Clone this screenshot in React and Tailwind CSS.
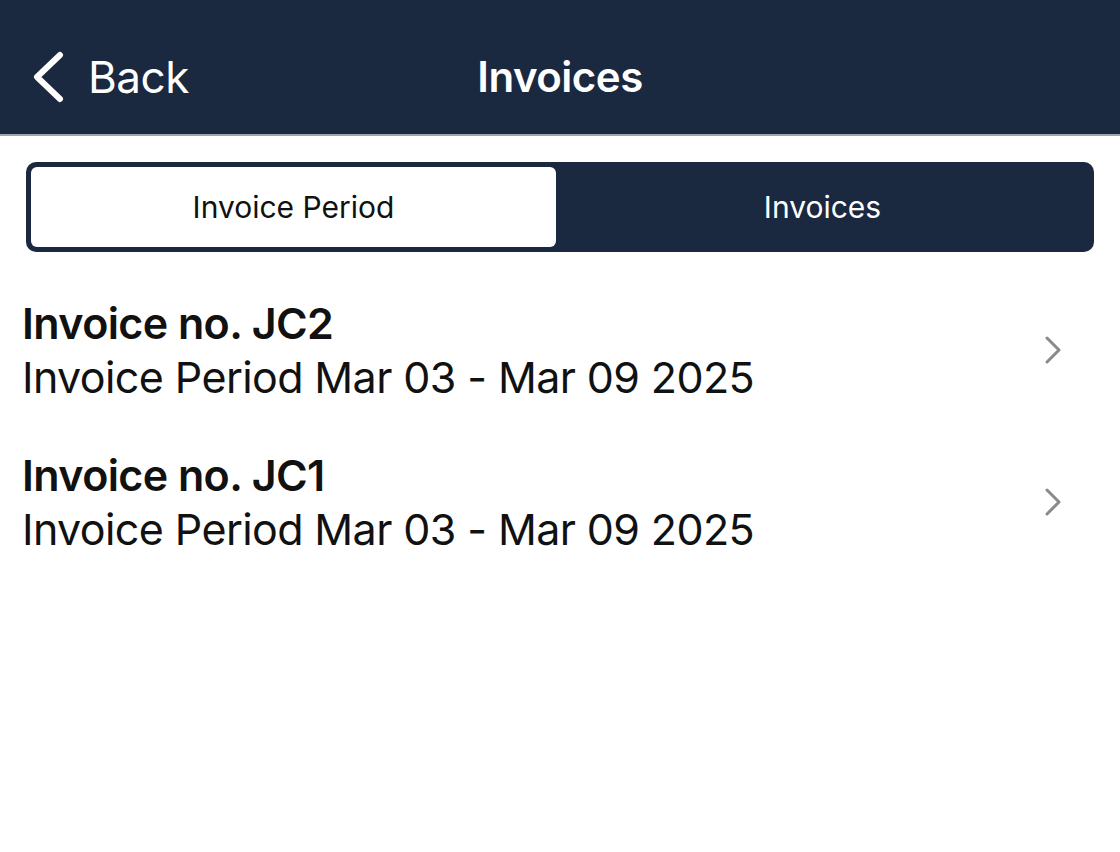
const invoices = [
  { no: 'JC2', period: 'Mar 03 - Mar 09 2025' },
  { no: 'JC1', period: 'Mar 03 - Mar 09 2025' },
]

const App = () => {
  return (
    <div className="min-h-[852px] bg-white font-['Inter',sans-serif]">
      {/* Header */}
      <div className="relative flex h-[136px] items-center border-b-2 border-[#9aa5b4] bg-[#1a2840] px-[30px] pt-[20px] text-white">
        <div className="flex items-center gap-[22px]">
          <svg width="36" height="52" viewBox="0 0 36 52" fill="none" stroke="white" strokeWidth="6" strokeLinecap="round" strokeLinejoin="round">
            <path d="M30 4 L7 26 L30 48" />
          </svg>
          <span className="text-[44px] leading-none tracking-[-0.5px]">Back</span>
        </div>
        <h1 className="absolute left-1/2 -translate-x-1/2 text-[42px] font-semibold leading-none tracking-[-0.5px]">Invoices</h1>
      </div>

      {/* Segmented control */}
      <div className="mx-[26px] mt-[26px] flex h-[90px] rounded-[10px] bg-[#1a2840] p-[5px]">
        <button className="flex w-[525px] items-center justify-center rounded-[6px] bg-white text-[30px] text-[#111]">
          Invoice Period
        </button>
        <button className="flex flex-1 items-center justify-center text-[30px] text-white">
          Invoices
        </button>
      </div>

      {/* List */}
      <div className="mt-[44px]">
        {invoices.map((inv, i) => (
          <div key={i} className="flex h-[152px] items-start justify-between pl-[22px] pr-[58px]">
            <div>
              <p className="text-[43px] font-semibold leading-[54px] tracking-[-0.6px] text-[#111]">Invoice no. {inv.no}</p>
              <p className="text-[43px] leading-[54px] tracking-[-0.6px] text-[#111]">Invoice Period {inv.period}</p>
            </div>
            <svg className="mt-[40px]" width="18" height="28" viewBox="0 0 18 28" fill="none" stroke="#8a8a8e" strokeWidth="3" strokeLinecap="round" strokeLinejoin="round">
              <path d="M3 2 L15 14 L3 26" />
            </svg>
          </div>
        ))}
      </div>
    </div>
  )
}

export default App
